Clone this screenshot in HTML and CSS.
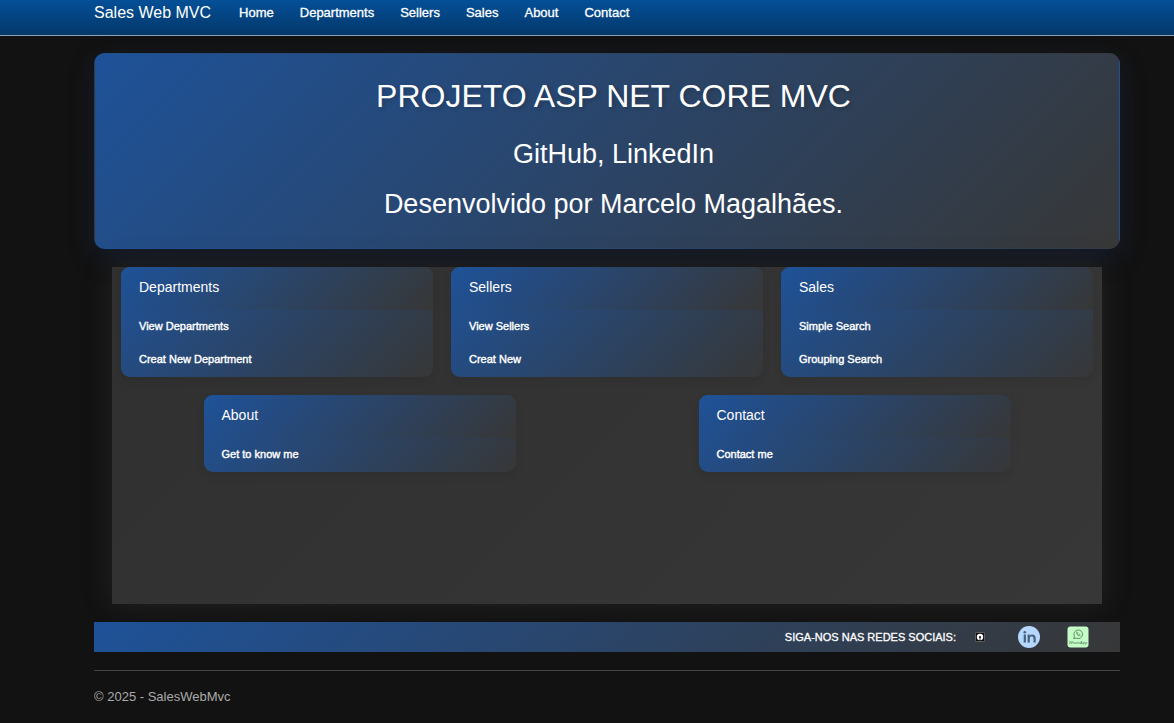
FILE: index.html
```html
<!DOCTYPE html>
<html lang="pt-BR">
<head>
<meta charset="utf-8">
<title>Sales Web MVC</title>
<link rel="stylesheet" href="styles.css">
</head>
<body>
<header class="navbar">
  <a class="brand" href="#">Sales Web MVC</a>
  <nav class="nav-links">
    <a href="#">Home</a>
    <a href="#">Departments</a>
    <a href="#">Sellers</a>
    <a href="#">Sales</a>
    <a href="#">About</a>
    <a href="#">Contact</a>
  </nav>
</header>
<div class="page">
  <section class="hero">
    <h1>PROJETO ASP NET CORE MVC</h1>
    <h2>GitHub, LinkedIn</h2>
    <h2>Desenvolvido por Marcelo Magalhães.</h2>
  </section>
  <main class="panel">
    <div class="cell">
      <section class="card">
        <h3>Departments</h3>
        <ul>
          <li><a href="#">View Departments</a></li>
          <li><a href="#">Creat New Department</a></li>
        </ul>
      </section>
    </div>
    <div class="cell">
      <section class="card">
        <h3>Sellers</h3>
        <ul>
          <li><a href="#">View Sellers</a></li>
          <li><a href="#">Creat New</a></li>
        </ul>
      </section>
    </div>
    <div class="cell">
      <section class="card">
        <h3>Sales</h3>
        <ul>
          <li><a href="#">Simple Search</a></li>
          <li><a href="#">Grouping Search</a></li>
        </ul>
      </section>
    </div>
    <div class="cell">
      <section class="card">
        <h3>About</h3>
        <ul>
          <li><a href="#">Get to know me</a></li>
        </ul>
      </section>
    </div>
    <div class="cell">
      <section class="card">
        <h3>Contact</h3>
        <ul>
          <li><a href="#">Contact me</a></li>
        </ul>
      </section>
    </div>
  </main>
  <section class="social">
    <span>SIGA-NOS NAS REDES SOCIAIS:</span>
    <a class="github" href="#" aria-label="GitHub">
      <svg width="10" height="10" viewBox="0 0 10 10"><rect x=".4" y=".4" width="9.2" height="9.2" rx="1" fill="#0c0c0c" stroke="#777" stroke-width=".8"/><circle cx="5" cy="5" r="3.200" fill="#fff"/><path d="M4 4.200h2v1.200l-.6.700v2.400h-.8V6.100L4 5.400Z" fill="#0c0c0c"/></svg>
    </a>
    <a class="linkedin" href="#" aria-label="LinkedIn">
      <svg width="22" height="22" viewBox="0 0 22 22"><circle cx="11" cy="11" r="11" fill="#b5d6fd"/><g fill="#47617c"><circle cx="6.800" cy="6.300" r="1.300"/><path d="M5.700 8.600h2.200v7.800H5.700ZM9.600 8.600h2.100v1.100c1.300-2 6-1.800 6 2.200v4.500h-2.200v-4c0-2.600-3.700-2.400-3.700 0v4H9.600Z"/></g></svg>
    </a>
    <a class="whatsapp" href="#" aria-label="WhatsApp">
      <svg width="22" height="22" viewBox="0 0 22 22"><rect x=".5" y=".5" width="21" height="21" rx="3" fill="#c4fdc6"/><g fill="none" stroke="#487651" stroke-width=".8"><path d="m6.700 12.700.7-2.500a4.300 4.300 0 1 1 1.700 1.800Z"/><path d="M9.600 6.300c-.7 1.800 1.300 3.800 3.300 3.400l.5-.8-1.200-.7-.6.500-1.100-1.200.4-.7-.6-.9Z" stroke-width=".6"/></g><text x="11" y="17.500" text-anchor="middle">WhatsApp</text></svg>
    </a>
  </section>
  <footer class="footer">© 2025 - SalesWebMvc</footer>
</div>
</body>
</html>
```
FILE: styles.css
```css
* { box-sizing: border-box; }

:root { --fade: linear-gradient(135deg, #1e5299, #373737); }

body {
  margin: 0;
  background: #121212;
  color: #fff;
  font-family: "Liberation Sans", Arial, sans-serif;
  font-size: 13px;
}

a { color: inherit; text-decoration: none; }

h1, h2, h3, ul { margin: 0; padding: 0; font-weight: 400; }

ul { list-style: none; }

.navbar {
  display: flex;
  gap: 28px;
  height: 36px;
  padding: 0 94px;
  line-height: 26px;
  background: linear-gradient(#044f97, #03386b);
  border-bottom: 1px solid #8ba2b6;
}

.brand { font-size: 16px; }

.nav-links {
  display: flex;
  gap: 26px;
  -webkit-text-stroke: 0.3px #fff;
}

.page { margin: 17px 54px 0 94px; }

.hero {
  display: flex;
  flex-direction: column;
  gap: 18px;
  padding: 22px 17px 28px 30px;
  text-align: center;
  background: var(--fade);
  border: 1px solid transparent;
  border-radius: 11px;
  box-shadow: 0 9px 27px rgba(30, 60, 120, 0.25);
}

.hero h1 {
  padding-bottom: 4px;
  font-size: 32px;
  line-height: 40px;
  text-shadow: 2px 2px 4px rgba(0, 0, 0, 0.2);
}

.hero h2 { font-size: 27px; line-height: 32px; }

.panel {
  display: flex;
  flex-wrap: wrap;
  justify-content: space-around;
  align-content: flex-start;
  min-height: 337px;
  margin: 18px;
  background: linear-gradient(135deg, #303030, #373737);
  box-shadow: 0 0 27px rgba(80, 80, 80, 0.3);
}

.cell {
  width: calc(100% / 3);
  padding: 0 9px 18px;
}

.card {
  overflow: hidden;
  background: var(--fade);
  border-radius: 9px;
  box-shadow: 0 4px 9px rgba(0, 0, 0, 0.08);
}

.card h3 {
  padding: 8px 18px 11px;
  font-size: 14px;
  line-height: 24px;
  background: var(--fade);
}

.card ul { padding-bottom: 1px; }

.card li {
  padding: 8px 18px 9px;
  font-size: 11px;
  line-height: 16px;
  -webkit-text-stroke: 0.4px #fff;
}

.social {
  display: flex;
  align-items: center;
  justify-content: flex-end;
  height: 30px;
  padding-right: 31px;
  font-size: 11px;
  background: var(--fade);
}

.social span { -webkit-text-stroke: 0.3px #fff; }

.social svg { display: block; }

.github { margin-left: 19px; }

.linkedin { margin-left: 33px; }

.whatsapp { margin-left: 27px; }

.whatsapp text {
  font-size: 4px;
  fill: #487651;
}

.footer {
  margin-top: 18px;
  padding: 17px 0 18px;
  color: #aaa;
  line-height: 17px;
  border-top: 1px solid #444;
}
```
